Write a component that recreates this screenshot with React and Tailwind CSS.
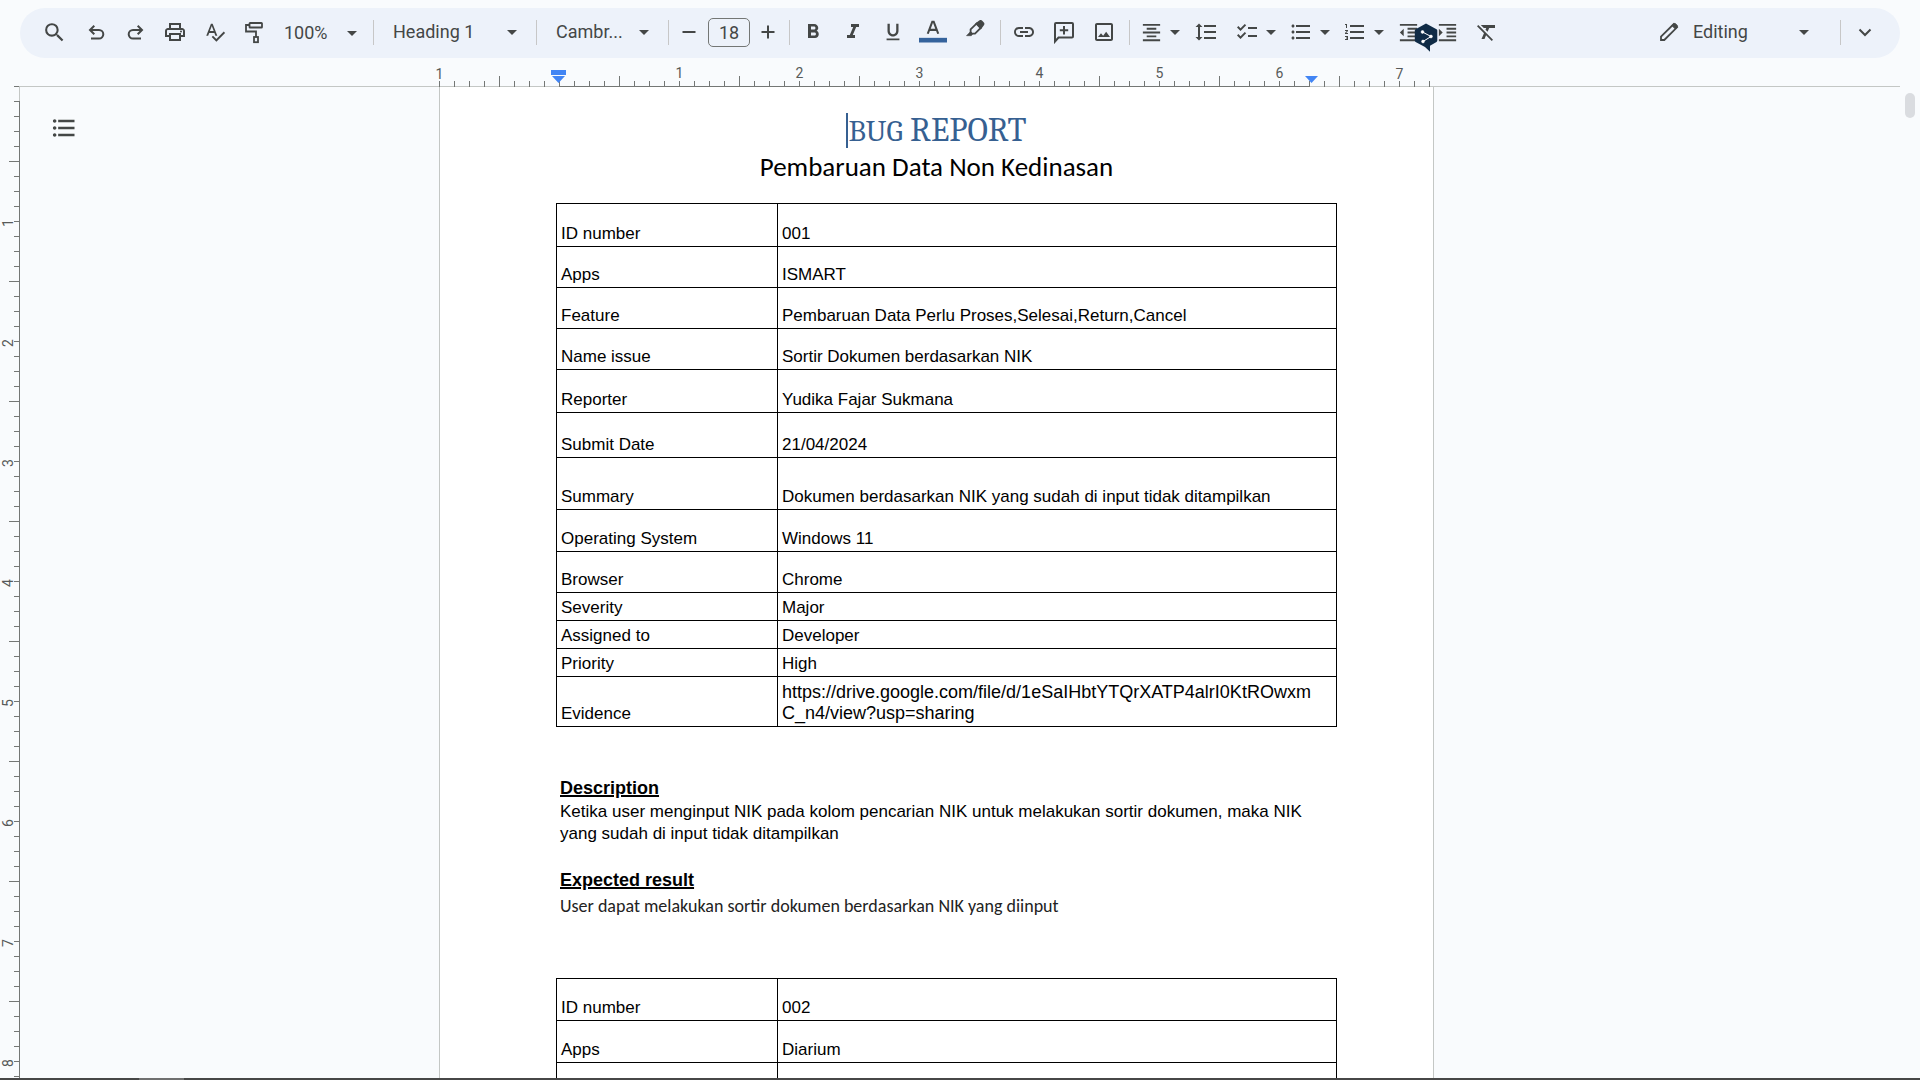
import React from "react";
import {
  MdSearch, MdOutlinePrint, MdSpellcheck, MdFormatBold, MdFormatItalic, MdFormatUnderlined,
  MdFormatAlignCenter, MdFormatLineSpacing, MdChecklist, MdFormatListBulleted,
  MdFormatListNumbered, MdFormatIndentDecrease, MdFormatIndentIncrease, MdFormatClear,
  MdOutlineImage, MdLink, MdArrowDropDown,
} from "react-icons/md";

const Svg = ({ children, size = 24, sw = 2 }) => (
  <svg width={size} height={size} viewBox="0 0 24 24" fill="none" stroke="currentColor" strokeWidth={sw} aria-hidden="true">
    {children}
  </svg>
);

const Undo = () => (
  <Svg><path d="M6 10h9a4.3 4.3 0 0 1 0 8.6H7" /><path d="M10.3 5.7 6 10l4.3 4.3" /></Svg>
);
const Redo = () => (
  <Svg><path d="M18 10H9a4.3 4.3 0 0 0 0 8.6h8" /><path d="M13.7 5.7 18 10l-4.3 4.3" /></Svg>
);
const Roller = () => (
  <Svg sw={1.8}>
    <rect x="7.5" y="3" width="12.5" height="4.5" rx=".6" />
    <path d="M7.5 5H4v6.5h10V17" />
    <rect x="12" y="17" width="4" height="5.2" />
  </Svg>
);
const Marker = () => (
  <Svg sw={1.8}>
    <path d="m13.5 3.6 3.2-2.4q1-.7 1.9.2l1.4 1.4q.9.9.2 1.9l-2.5 3.3z" fill="currentColor" />
    <path d="m13.5 3.6-5.9 5.7v3.2l1.2 1.2H12l5.7-5.7z" />
    <path d="m7.6 11.5-4.1 4.2h4.8l1.4-1.8z" fill="currentColor" strokeWidth=".6" />
  </Svg>
);
const AddComment = () => (
  <Svg>
    <path d="M3 21.5V4q0-1 1-1h16q1 0 1 1v12.5q0 1-1 1H6.5z" />
    <path d="M12 6v8.4M7.8 10.2h8.4" />
  </Svg>
);
const Pencil = () => (
  <Svg sw={1.8}>
    <path d="M4 20v-3.3L16.7 4l3.3 3.3L7.3 20z" />
    <path d="m15 5.7 2-2q.8-.7 1.6 0l1.7 1.7q.7.8 0 1.6l-2 2z" fill="currentColor" strokeWidth=".8" />
  </Svg>
);
const Badge = () => (
  <svg width="24" height="30" viewBox="0 0 24 30" aria-hidden="true">
    <path d="M12 .5 22.5 6.2q.8.5.8 1.4v10q0 .9-.8 1.4L16 22.800v6L11 24 1.600 19Q.8 18.500.8 17.600v-10q0-.9.8-1.400z" fill="#0f2b46" />
    <g fill="#fff" stroke="#fff" strokeWidth=".6">
      <path d="M8.500 9 17 13.500 9 18.500" fill="none" strokeWidth="1" />
      <circle cx="8.500" cy="9" r="1.400" />
      <circle cx="17" cy="13.500" r="1.400" />
      <circle cx="9" cy="18.500" r="1.400" />
    </g>
  </svg>
);

const Btn = ({ label, className = "w-10", children }) => (
  <button type="button" aria-label={label} className={"flex h-9 shrink-0 items-center justify-center " + className}>
    {children}
  </button>
);
const Sep = ({ className = "" }) => <div className={"h-[25px] w-px shrink-0 bg-[#c7c7c7] " + className} />;

function Toolbar() {
  return (
    <div role="toolbar" aria-label="Formatting" className="mx-5 mt-2 flex h-[50px] items-center rounded-full bg-[#edf2fa] pr-[15px] pb-[2px] pl-3 font-[Roboto,sans-serif] text-lg text-[#444746]">
      <Btn label="Search" className="w-11"><MdSearch size={25} /></Btn>
      <Btn label="Undo" className="w-10"><Undo /></Btn>
      <Btn label="Redo" className="w-[39px]"><Redo /></Btn>
      <Btn label="Print"><MdOutlinePrint size={24} /></Btn>
      <Btn label="Spelling check" className="w-[39px]"><MdSpellcheck size={22} /></Btn>
      <Btn label="Paint format" className="w-[39px]"><Roller /></Btn>
      <button type="button" className="flex h-9 w-[91px] shrink-0 items-center justify-between pt-[2px] pl-[11px]">100%<MdArrowDropDown size={24} /></button>
      <Sep className="ml-[9px]" />
      <button type="button" className="flex h-9 w-[162px] shrink-0 items-center justify-between pr-3 pl-[19px]">Heading 1<MdArrowDropDown size={24} /></button>
      <Sep />
      <button type="button" className="flex h-9 w-[131px] shrink-0 items-center justify-between pr-3 pl-[19px]">Cambr...<MdArrowDropDown size={24} /></button>
      <Sep />
      <Btn label="Decrease font size" className="w-[39px]"><Svg><path d="M5.500 12h13" /></Svg></Btn>
      <input aria-label="Font size" defaultValue="18" className="h-[29px] w-[42px] shrink-0 rounded-[5px] border border-[#747775] text-center" />
      <Btn label="Increase font size" className="w-9"><Svg><path d="M5.500 12h13M12 5.500v13" /></Svg></Btn>
      <Sep className="ml-[3px]" />
      <Btn label="Bold" className="ml-[3px] w-10"><MdFormatBold size={24} /></Btn>
      <Btn label="Italic"><MdFormatItalic size={24} /></Btn>
      <Btn label="Underline"><MdFormatUnderlined size={22} /></Btn>
      <Btn label="Text color">
        <Svg size={28} sw={1.8}><path d="M7.500 13.500 11.400 3.200h1.200l3.900 10.300M9 10.200h6" /><path d="M0 19h24" stroke="#35639c" strokeWidth="4" /></Svg>
      </Btn>
      <Btn label="Highlight color" className="w-11"><Marker /></Btn>
      <Sep className="ml-[3px]" />
      <Btn label="Insert link" className="ml-[3px] w-10"><MdLink size={24} /></Btn>
      <Btn label="Add comment"><AddComment /></Btn>
      <Btn label="Insert image"><MdOutlineImage size={24} /></Btn>
      <Sep className="ml-[5px]" />
      <Btn label="Align" className="ml-[9px] w-12"><MdFormatAlignCenter size={23} /><MdArrowDropDown size={24} /></Btn>
      <Btn label="Line spacing" className="w-[38px]"><MdFormatLineSpacing size={24} /></Btn>
      <Btn label="Checklist" className="ml-[7px] w-[54px]"><MdChecklist size={24} /><MdArrowDropDown size={24} /></Btn>
      <Btn label="Bulleted list" className="w-[54px]"><MdFormatListBulleted size={24} /><MdArrowDropDown size={24} /></Btn>
      <Btn label="Numbered list" className="w-[54px]"><MdFormatListNumbered size={24} /><MdArrowDropDown size={24} /></Btn>
      <div className="relative shrink-0">
        <Btn label="Decrease indent" className="w-7"><MdFormatIndentDecrease size={23} /></Btn>
        <div className="absolute top-[9px] left-5"><Badge /></div>
      </div>
      <Btn label="Increase indent" className="w-[50px]"><MdFormatIndentIncrease size={23} /></Btn>
      <Btn label="Clear formatting" className="w-[30px]"><MdFormatClear size={24} /></Btn>
      <button type="button" className="ml-auto flex h-9 w-[159px] shrink-0 items-center"><Pencil /><span className="mr-auto ml-3">Editing</span><MdArrowDropDown size={24} /></button>
      <Sep className="ml-6" />
      <Btn label="Hide menus" className="ml-1 w-10"><Svg><path d="m6.500 9.500 5.500 5.500 5.500-5.500" /></Svg></Btn>
    </div>
  );
}

function TopRuler() {
  return (
    <div className="mr-5 ml-[19px] flex h-[29px] justify-center border-b border-[#c4c7c5] pr-[47px]">
      <div className="relative flex h-[29px] w-[995px] shrink-0 items-end font-[Roboto,sans-serif] text-sm text-[#575a59]">
        {Array.from({ length: 67 }, (_, i) => (
          <div key={i} className={"relative w-[15px] shrink-0 border-l border-[#747775] " + (i % 8 === 4 ? "h-[11px]" : "h-[6px]") + (i >= 8 && i < 58 ? " border-b" : "")}>
            {i % 8 === 0 && i !== 8 && (
              <span className="absolute bottom-[5px] -left-2 w-4 text-center leading-4">{Math.abs(i / 8 - 1)}</span>
            )}
          </div>
        ))}
        <svg className="absolute bottom-[3px] left-[112px]" width="15" height="14" aria-hidden="true"><path d="M0 0h15v5H0zM1 6h13l-6.500 7z" fill="#4285f4" /></svg>
        <svg className="absolute bottom-[3px] left-[865px]" width="15" height="14" aria-hidden="true"><path d="M1 6h13l-6.500 7z" fill="#4285f4" /></svg>
      </div>
    </div>
  );
}

function SideRuler() {
  return (
    <div className="flex w-5 shrink-0 flex-col items-end overflow-hidden font-[Roboto,sans-serif] text-sm text-[#575a59]">
      {Array.from({ length: 67 }, (_, i) => (
        <div key={i} className={"relative flex h-[15px] w-5 shrink-0 justify-end border-r " + (i ? "border-[#747775]" : "border-[#c4c7c5]")}>
          <div className={"h-px bg-[#747775] " + (i % 8 === 5 ? "w-[10px]" : "w-[5px]")} />
          {i % 8 === 1 && i > 1 && (
            <span className="absolute -top-[6px] left-0 flex h-4 w-[15px] -rotate-90 items-center justify-center leading-4">{(i - 1) / 8}</span>
          )}
        </div>
      ))}
    </div>
  );
}

const report1 = [
  ["ID number", "001", "h-[43px]"],
  ["Apps", "ISMART", "h-[41px]"],
  ["Feature", "Pembaruan Data Perlu Proses,Selesai,Return,Cancel", "h-[41px]"],
  ["Name issue", "Sortir Dokumen berdasarkan NIK", "h-[41px]"],
  ["Reporter", "Yudika Fajar Sukmana", "h-[43px]"],
  ["Submit Date", "21/04/2024", "h-[45px]"],
  ["Summary", "Dokumen berdasarkan NIK yang sudah di input tidak ditampilkan", "h-[52px]"],
  ["Operating System", "Windows 11", "h-[42px]"],
  ["Browser", "Chrome", "h-[41px]"],
  ["Severity", "Major", "h-7"],
  ["Assigned to", "Developer", "h-7"],
  ["Priority", "High", "h-7"],
  ["Evidence", "https://drive.google.com/file/d/1eSaIHbtYTQrXATP4alrI0KtROwxmC_n4/view?usp=sharing", "h-[50px]", true],
];
const report2 = [
  ["ID number", "002", "h-[42px]"],
  ["Apps", "Diarium", "h-[42px]"],
  ["", "", "h-[42px]"],
];

function Report({ rows }) {
  return (
    <table className="-ml-1 w-[781px] table-fixed border-collapse text-[17px] leading-5">
      <colgroup><col className="w-[221px]" /><col /></colgroup>
      <tbody>
        {rows.map(([k, v, h, big]) => (
          <tr key={k} className={h}>
            <th scope="row" className="border border-black px-1 pb-[2px] text-left align-bottom font-normal">{k}</th>
            <td className={"border border-black pb-[2px] pl-1 align-bottom break-all " + (big ? "pr-5 text-lg leading-[21px]" : "pr-1")}>{v}</td>
          </tr>
        ))}
      </tbody>
    </table>
  );
}

export default function App() {
  return (
    <div className="flex h-screen flex-col overflow-hidden bg-[#f9fbfd]">
      <Toolbar />
      <TopRuler />
      <div className="-mt-px flex min-h-0 flex-1">
        <SideRuler />
        <div className="relative mt-px flex min-w-0 flex-1 justify-center overflow-hidden pr-[52px]">
          <button type="button" aria-label="Show outline" className="absolute top-[27px] left-[30px] text-[#444746]">
            <MdFormatListBulleted size={28} />
          </button>
          <main className="w-[995px] shrink-0 border-x border-[#c4c7c5] bg-white px-[120px] font-['Liberation_Sans',Arial,sans-serif] text-black">
            <h1 className="mt-[26px] flex h-[35px] items-center justify-center font-[Cambria,Caladea,'Noto_Serif','Liberation_Serif',serif] text-[34px] leading-[35px] text-[#366091]">
              <span className="h-[35px] w-[2px] bg-[#366091]" />
              <span><span className="text-[30px]">BUG</span> REPORT</span>
            </h1>
            <h2 className="mt-[2px] text-center font-[Calibri,Carlito,Lato,sans-serif] text-[27px] leading-[34px]">Pembaruan Data Non Kedinasan</h2>
            <div className="mt-[19px]"><Report rows={report1} /></div>
            <h3 className="mt-[50px] text-lg leading-[22px] font-bold underline decoration-2">Description</h3>
            <p className="mt-[2px] text-[17px] leading-[22px]">Ketika user menginput NIK pada kolom pencarian NIK untuk melakukan sortir dokumen, maka NIK yang sudah di input tidak ditampilkan</p>
            <h3 className="mt-6 text-lg leading-[22px] font-bold underline decoration-2">Expected result</h3>
            <p className="mt-1 font-[Calibri,Carlito,Lato,sans-serif] text-lg leading-[22px] text-[#222]">User dapat melakukan sortir dokumen berdasarkan NIK yang diinput</p>
            <div className="mt-[61px]"><Report rows={report2} /></div>
          </main>
        </div>
        <div className="mt-[7px] mr-[5px] h-[25px] w-[10px] shrink-0 rounded-full bg-[#dadce0]" />
      </div>
      <div className="flex h-[2px] shrink-0 bg-[#474747]"><div className="ml-[139px] w-[45px] bg-[#707070]" /></div>
    </div>
  );
}
